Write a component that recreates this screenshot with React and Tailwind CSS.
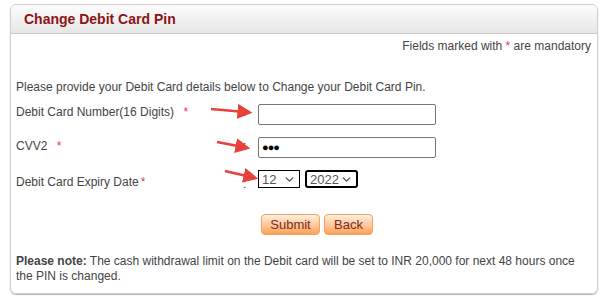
import { ChevronDown } from "lucide-react"

function Star() {
  return <span className="text-[#e8335e]">*</span>
}

function Select({ value, width, focused }) {
  return (
    <div
      className={`h-[18px] flex items-center justify-between bg-white pl-[3px] pr-[3px] text-[13px] text-[#555] ${width} ${focused ? 'border-2 border-black rounded-[3px]' : 'border border-black'}`}
    >
      <span className="leading-none">{value}</span>
      <ChevronDown size={13} strokeWidth={2.5} className="text-[#555]" />
    </div>
  )
}

export default function App() {
  return (
    <div className="relative w-[602px] h-[302px] bg-white pt-[4px] pl-[10px] font-['Liberation_Sans',Arial,sans-serif] text-[12px] text-[#444]">
      <div className="w-[588px] h-[290px] border border-[#cfcfcf] rounded-[6px] overflow-hidden shadow-[0_1px_1px_#b5b5b5]">

        <div className="h-[29px] flex items-center pl-[13px] bg-gradient-to-b from-[#fcfcfc] to-[#e6e6e6] border-b border-[#c9c9c9]">
          <h1 className="text-[14px] font-bold text-[#8b1515]">Change Debit Card Pin</h1>
        </div>

        <div className="px-[5px]">
          <p className="text-right pt-[4px] pr-[1px] leading-[16px]">
            Fields marked with <Star /> are mandatory
          </p>

          <p className="mt-[25px] leading-[16px]">
            Please provide your Debit Card details below to Change your Debit Card Pin.
          </p>

          <div className="mt-[9px] grid grid-cols-[227px_15px_1fr] gap-y-[12px] items-start">
            <div className="leading-[16px]">
              Debit Card Number(16 Digits) <span className="ml-[6px]"><Star /></span>
            </div>
            <div className="leading-[16px]">:</div>
            <div className="w-[178px] h-[21px] border border-[#767676] rounded-[2px] bg-white" />

            <div className="leading-[16px] pt-[1px]">
              CVV2 <span className="ml-[6px]"><Star /></span>
            </div>
            <div className="leading-[16px] pt-[1px]">:</div>
            <div className="w-[178px] h-[21px] border border-[#767676] rounded-[2px] bg-white flex items-center pl-[3px] text-[11px] text-black tracking-[-1px]">
              ●●●
            </div>

            <div className="leading-[16px] pt-[4px]">
              Debit Card Expiry Date<span className="ml-[2px]"><Star /></span>
            </div>
            <div className="leading-[16px] pt-[6px]">:</div>
            <div className="flex gap-[5px]">
              <Select value="12" width="w-[42px]" />
              <Select value="2022" width="w-[53px]" focused />
            </div>
          </div>

          <div className="mt-[22px] flex gap-[4px] pl-[245px]">
            <button className="w-[59px] h-[21px] rounded-[4px] border border-[#f4a35e] bg-gradient-to-b from-[#fff0e0] to-[#fca154] text-[13px] text-[#7b2a22]">
              Submit
            </button>
            <button className="w-[49px] h-[21px] rounded-[4px] border border-[#f4a35e] bg-gradient-to-b from-[#fff0e0] to-[#fca154] text-[13px] text-[#7b2a22]">
              Back
            </button>
          </div>

          <p className="mt-[19px] leading-[15px] pr-[2px]">
            <b>Please note:</b> The cash withdrawal limit on the Debit card will be set to INR 20,000 for next 48 hours once the PIN is changed.
          </p>
        </div>
      </div>

      <svg className="absolute inset-0 pointer-events-none" width="602" height="302">
        <defs>
          <marker id="head" markerWidth="6" markerHeight="6" refX="3" refY="3" orient="auto" markerUnits="strokeWidth">
            <path d="M0,0 L6,3 L0,6 z" fill="#e8403a" />
          </marker>
        </defs>
        <line x1="211" y1="109" x2="245" y2="112" stroke="#e8403a" strokeWidth="2.5" markerEnd="url(#head)" />
        <line x1="217" y1="142" x2="243" y2="147" stroke="#e8403a" strokeWidth="2.5" markerEnd="url(#head)" />
        <line x1="225" y1="171" x2="251" y2="177" stroke="#e8403a" strokeWidth="2.5" markerEnd="url(#head)" />
      </svg>
    </div>
  )
}
